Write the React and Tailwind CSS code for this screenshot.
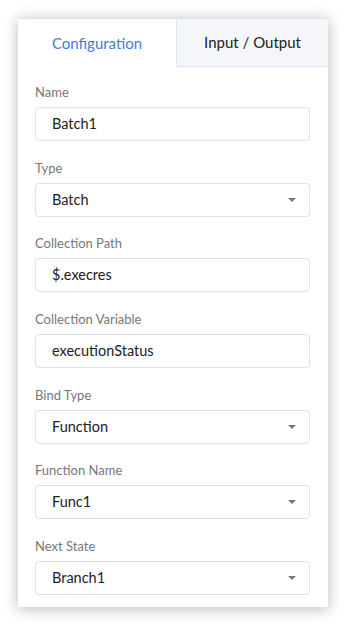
import React from "react";

const fields = [
  { label: "Name", value: "Batch1" },
  { label: "Type", value: "Batch", select: true },
  { label: "Collection Path", value: "$.execres" },
  { label: "Collection Variable", value: "executionStatus" },
  { label: "Bind Type", value: "Function", select: true },
  { label: "Function Name", value: "Func1", select: true },
  { label: "Next State", value: "Branch1", select: true },
];

const Field = ({ label, value, select }) => (
  <div className="flex flex-col">
    <div className="h-4 text-[13px] leading-4 text-[#777]">{label}</div>
    <div className="mt-[7px] h-[34px] rounded-[4px] border border-[#dfe1e8] flex items-center justify-between pl-4 pr-[13px]">
      <span className="text-[14.5px] text-[#222]">{value}</span>
      {select && (
        <span className="w-0 h-0 border-l-[4px] border-r-[4px] border-t-[4px] border-l-transparent border-r-transparent border-t-[#777]" />
      )}
    </div>
  </div>
);

export default function App() {
  return (
    <div className="w-[346px] h-[626px] bg-white pt-[18px] pl-[18px]" style={{ fontFamily: "Lato, 'Open Sans', sans-serif" }}>
      <div className="w-[310px] h-[589px] bg-white shadow-[0_2px_14px_rgba(0,0,0,0.28)] flex flex-col">
        <div className="flex h-[49px] border-t border-[#dde4f7]">
          <div className="w-[158px] flex items-center justify-center text-[15px] text-[#4a78d4]">Configuration</div>
          <div className="flex-1 flex items-center justify-center text-[15px] text-[#222] bg-[#f5f6fa] border-l border-b border-[#dde4f7]">Input / Output</div>
        </div>
        <div className="flex flex-col gap-[18.67px] pt-[17px] pl-[17px] pr-[18px]">
          {fields.map((f) => (
            <Field key={f.label} {...f} />
          ))}
        </div>
      </div>
    </div>
  );
}
